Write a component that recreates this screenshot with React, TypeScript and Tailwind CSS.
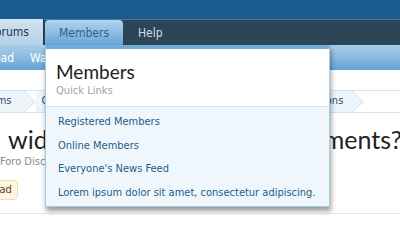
import React from 'react'

const small = "font-['DejaVu_Sans_Condensed','DejaVu_Sans',sans-serif]"
const display = "font-['Lato','Open_Sans',sans-serif]"

function Chevron({ fill }: { fill: string }) {
  return (
    <svg width="13" height="22" viewBox="0 0 13 22" className="block shrink-0">
      <path d="M0 0 L12 11 L0 22 Z" fill={fill} />
      <path d="M0.5 0 L12 11 L0.5 22" fill="none" stroke="#cbdbe8" strokeWidth="1" />
    </svg>
  )
}

const links = [
  'Registered Members',
  'Online Members',
  "Everyone's News Feed",
  'Lorem ipsum dolor sit amet, consectetur adipiscing.',
]

export default function App() {
  return (
    <div className={`relative w-[400px] h-[220px] overflow-hidden bg-white ${small}`}>
      {/* header */}
      <div className="h-[19px] bg-[#1b5a8c]" />

      {/* tab bar */}
      <div className="h-[26px] bg-[#2c4657] border-t border-[#4d7697] flex items-end">
        <div className="-ml-[40px] w-[84px] h-[26px] bg-gradient-to-b from-[#d2e3f1] to-[#b6d0e6] border-r border-[#1f3b52] flex items-center justify-end pr-[14px] text-[12px] text-[#1b3a55]">
          Forums
        </div>
        <div className="ml-[1px] w-[78px] h-[25px] rounded-t-[4px] bg-gradient-to-b from-[#afd2ee] via-[#8dbde3] to-[#67a4d4] flex items-center justify-center text-[12px] text-[#2d5f8a]">
          Members
        </div>
        <div className="h-[25px] flex items-center pl-[15px] text-[12px] text-[#cfdde8]">Help</div>
      </div>

      {/* sub nav */}
      <div className="h-[25px] bg-gradient-to-b from-[#a9cce6] via-[#8bbbe0] to-[#63a1d3] flex items-center text-[12px] text-white">
        <span className="-ml-[13px]">Read</span>
        <span className="ml-[16px]">Watched</span>
      </div>

      <div className="h-[20px]" />

      {/* breadcrumb */}
      <div className="h-[23px] border-y border-[#d3e2ee] flex items-stretch text-[11px] text-[#2a4f72]">
        <div className="flex items-center bg-[#edf4fa] pr-[11px]">
          <span className="-ml-[25px]">Forums</span>
        </div>
        <Chevron fill="#edf4fa" />
        <div className="flex items-center bg-[#edf4fa] w-[250px] pl-[6px]">Comunidad</div>
        <div className="flex items-center bg-[#edf4fa] pr-[8px]">Discussions</div>
        <Chevron fill="#edf4fa" />
      </div>

      {/* title */}
      <div className={`mt-[11px] flex w-[402px] text-[25px] leading-[30px] text-[#222] ${display}`}>
        <span className="pl-[8px]">wid</span>
        <span className="ml-auto">ments?</span>
      </div>
      <div className="mt-[1px] text-[11px] leading-[14px] text-[#8a8a8a]">
        <span>Foro Discusiones</span>
      </div>
      <div className="mt-[11px] flex">
        <span className="-ml-[30px] h-[20px] rounded-[4px] border border-[#f3d7ae] bg-[#fff5e3] px-[5px] text-[11px] leading-[18px] text-[#5a3b1a]">
          Unread
        </span>
      </div>
      <div className="mt-[13px] border-t border-[#e1e8ee]" />

      {/* members popup */}
      <div className="absolute left-[45px] top-[45px] w-[285px] h-[162px] border-x border-b border-[#a9cbe4] border-t-[4px] border-t-[#72acd9] bg-[#f0f7fc] shadow-[1px_4px_5px_rgba(0,0,0,0.4)]">
        <div className="h-[58px] bg-white border-b border-[#d6e5f0] pl-[10px] pt-[11px]">
          <div className={`text-[19px] leading-[24px] text-[#1d1d1d] ${display}`}>Members</div>
          <div className="text-[11px] leading-[14px] text-[#a3a3a3]">Quick Links</div>
        </div>
        <ul className="pt-[4px]">
          {links.map((l) => (
            <li key={l} className="h-[23.4px] flex items-center pl-[12px] text-[11px] text-[#1f5c88]">
              {l}
            </li>
          ))}
        </ul>
      </div>
    </div>
  )
}
